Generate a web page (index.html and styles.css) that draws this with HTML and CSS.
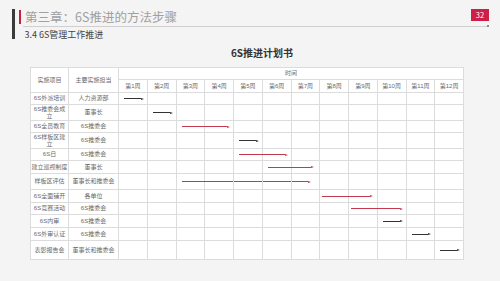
FILE: index.html
```html
<!DOCTYPE html>
<html lang="zh-CN">
<head>
<meta charset="utf-8">
<link rel="stylesheet" href="styles.css">
</head>
<body>
<div class="slide">
  <header class="hdr">
    <div class="bar"></div>
    <div class="hdr-main">
      <div class="title-row">
        <span class="mark"></span>
        <h1 class="title">第三章：6S推进的方法步骤</h1>
        <span class="pnum">32</span>
      </div>
      <div class="rule"><span class="line"></span><span class="dot"></span></div>
      <div class="sub">3.4 6S管理工作推进</div>
    </div>
  </header>

  <h2 class="plan-title">6S推进计划书</h2>

  <div class="gantt">
    <div class="c r2">实施项目</div>
    <div class="c r2">主要实施担当</div>
    <div class="c all">时间</div>
    <div class="c">第1周</div><div class="c">第2周</div><div class="c">第3周</div><div class="c">第4周</div>
    <div class="c">第5周</div><div class="c">第6周</div><div class="c">第7周</div><div class="c">第8周</div>
    <div class="c">第9周</div><div class="c">第10周</div><div class="c">第11周</div><div class="c">第12周</div>

    <div class="c">6S外派培训</div><div class="c">人力资源部</div>
    <div class="c w"><span class="arrow dark" style="--n:1"></span></div><div class="c w"></div><div class="c w"></div><div class="c w"></div><div class="c w"></div><div class="c w"></div><div class="c w"></div><div class="c w"></div><div class="c w"></div><div class="c w"></div><div class="c w"></div><div class="c w"></div>

    <div class="c">6S推委会成立</div><div class="c">董事长</div>
    <div class="c w"></div><div class="c w"><span class="arrow dark" style="--n:1"></span></div><div class="c w"></div><div class="c w"></div><div class="c w"></div><div class="c w"></div><div class="c w"></div><div class="c w"></div><div class="c w"></div><div class="c w"></div><div class="c w"></div><div class="c w"></div>

    <div class="c">6S全员教育</div><div class="c">6S推委会</div>
    <div class="c w"></div><div class="c w"></div><div class="c w"><span class="arrow red" style="--n:2"></span></div><div class="c w"></div><div class="c w"></div><div class="c w"></div><div class="c w"></div><div class="c w"></div><div class="c w"></div><div class="c w"></div><div class="c w"></div><div class="c w"></div>

    <div class="c">6S样板区建立</div><div class="c">6S推委会</div>
    <div class="c w"></div><div class="c w"></div><div class="c w"></div><div class="c w"></div><div class="c w"><span class="arrow dark" style="--n:1"></span></div><div class="c w"></div><div class="c w"></div><div class="c w"></div><div class="c w"></div><div class="c w"></div><div class="c w"></div><div class="c w"></div>

    <div class="c">6S日</div><div class="c">6S推委会</div>
    <div class="c w"></div><div class="c w"></div><div class="c w"></div><div class="c w"></div><div class="c w"><span class="arrow red" style="--n:2"></span></div><div class="c w"></div><div class="c w"></div><div class="c w"></div><div class="c w"></div><div class="c w"></div><div class="c w"></div><div class="c w"></div>

    <div class="c">建立巡视制度</div><div class="c">董事长</div>
    <div class="c w"></div><div class="c w"></div><div class="c w"></div><div class="c w"></div><div class="c w"></div><div class="c w"><span class="arrow red" style="--n:2;--t:11px"></span></div><div class="c w"></div><div class="c w"></div><div class="c w"></div><div class="c w"></div><div class="c w"></div><div class="c w"></div>

    <div class="c">样板区评估</div><div class="c">董事长和推委会</div>
    <div class="c w"></div><div class="c w"></div><div class="c w"><span class="arrow red" style="--n:5;--t:14px"></span></div><div class="c w"></div><div class="c w"></div><div class="c w"></div><div class="c w"></div><div class="c w"></div><div class="c w"></div><div class="c w"></div><div class="c w"></div><div class="c w"></div>

    <div class="c">6S全面铺开</div><div class="c">各单位</div>
    <div class="c w"></div><div class="c w"></div><div class="c w"></div><div class="c w"></div><div class="c w"></div><div class="c w"></div><div class="c w"></div><div class="c w"><span class="arrow red" style="--n:2;--l:2px;--t:7px"></span></div><div class="c w"></div><div class="c w"></div><div class="c w"></div><div class="c w"></div>

    <div class="c">6S竞赛活动</div><div class="c">6S推委会</div>
    <div class="c w"></div><div class="c w"></div><div class="c w"></div><div class="c w"></div><div class="c w"></div><div class="c w"></div><div class="c w"></div><div class="c w"></div><div class="c w"><span class="arrow red" style="--n:2;--l:2px;--t:6px"></span></div><div class="c w"></div><div class="c w"></div><div class="c w"></div>

    <div class="c">6S内审</div><div class="c">6S推委会</div>
    <div class="c w"></div><div class="c w"></div><div class="c w"></div><div class="c w"></div><div class="c w"></div><div class="c w"></div><div class="c w"></div><div class="c w"></div><div class="c w"></div><div class="c w"><span class="arrow dark" style="--n:1"></span></div><div class="c w"></div><div class="c w"></div>

    <div class="c">6S外审认证</div><div class="c">6S推委会</div>
    <div class="c w"></div><div class="c w"></div><div class="c w"></div><div class="c w"></div><div class="c w"></div><div class="c w"></div><div class="c w"></div><div class="c w"></div><div class="c w"></div><div class="c w"></div><div class="c w"><span class="arrow dark" style="--n:1"></span></div><div class="c w"></div>

    <div class="c">表彰报告会</div><div class="c">董事长和推委会</div>
    <div class="c w"></div><div class="c w"></div><div class="c w"></div><div class="c w"></div><div class="c w"></div><div class="c w"></div><div class="c w"></div><div class="c w"></div><div class="c w"></div><div class="c w"></div><div class="c w"></div><div class="c w"><span class="arrow dark" style="--n:1"></span></div>
  </div>
</div>
</body>
</html>
```

FILE: styles.css
```css
* { box-sizing: border-box; }

html, body {
  margin: 0;
  padding: 0;
  background: #f4f4f4;
}

body {
  width: 500px;
  height: 281px;
  overflow: hidden;
  font-family: "Noto Sans CJK SC", "Noto Sans", sans-serif;
}

.slide {
  width: 500px;
  height: 281px;
}

/* ---------- header ---------- */
.hdr {
  display: flex;
  gap: 4px;
  padding: 9px 11px 0 12px;
}

.bar {
  width: 2.5px;
  height: 30px;
  background: #3b3b3b;
  flex: none;
}

.hdr-main {
  flex: 1;
  display: flex;
  flex-direction: column;
}

.title-row {
  display: flex;
  align-items: flex-start;
  height: 16px;
}

.mark {
  width: 2.5px;
  height: 14px;
  margin-top: 1px;
  background: #c8203f;
  flex: none;
}

.title {
  margin: 0 0 0 4px;
  font-size: 12.5px;
  line-height: 16px;
  font-weight: 400;
  color: #a0a0a0;
  flex: 1;
  white-space: nowrap;
}

.pnum {
  width: 18px;
  height: 12px;
  background: #cf1f47;
  color: #fff;
  font-size: 7.5px;
  line-height: 12px;
  text-align: center;
}

.rule {
  display: flex;
  align-items: center;
  margin-left: 4px;
  height: 2px;
}

.rule .line {
  flex: 1;
  height: 1px;
  background: #cfcfcf;
}

.rule .dot {
  width: 2.5px;
  height: 2.5px;
  border-radius: 50%;
  background: #666;
}

.sub {
  margin: 2px 0 0 6px;
  font-size: 9px;
  line-height: 12px;
  font-weight: 400;
  color: #444;
}

/* ---------- plan title ---------- */
.plan-title {
  margin: 6px 0 8px 0;
  padding-left: 30px;
  width: 494px;
  text-align: center;
  font-size: 10px;
  line-height: 12px;
  font-weight: 700;
  color: #333;
}

/* ---------- gantt table ---------- */
.gantt {
  margin-left: 30px;
  width: 434px;
  display: grid;
  grid-template-columns: 38px 50px repeat(12, 1fr);
  grid-template-rows: 12px 13px 12px 16px 12px 16px 12px 13px 16px 13px 12px 13px 13px 19px;
  background: #fff;
  border-top: 1px solid #dcdcdc;
  border-left: 1px solid #dcdcdc;
  font-family: "Liberation Sans", "Noto Sans CJK SC", sans-serif;
}

.c {
  border-right: 1px solid #dcdcdc;
  border-bottom: 1px solid #dcdcdc;
  display: flex;
  align-items: center;
  justify-content: center;
  text-align: center;
  font-size: 6px;
  line-height: 7px;
  color: #6a6a6a;
  padding: 0;
  min-width: 0;
}

.r2 { grid-row: span 2; }
.all { grid-column: span 12; }

.w {
  justify-content: flex-start;
}

.arrow {
  --l: 5px;
  --t: 9px;
  display: flex;
  align-items: center;
  flex: none;
  margin-left: var(--l);
  width: calc(var(--n) * (100% + 1px) - var(--t));
  height: 3px;
}

.arrow::before {
  content: "";
  flex: 1;
  height: 1px;
  background: currentColor;
}

.arrow::after {
  content: "";
  width: 0;
  height: 0;
  border-left: 3px solid currentColor;
  border-top: 1.5px solid transparent;
  border-bottom: 1.5px solid transparent;
}

.dark { color: #333; }
.red { color: #c23a4e; }
```
